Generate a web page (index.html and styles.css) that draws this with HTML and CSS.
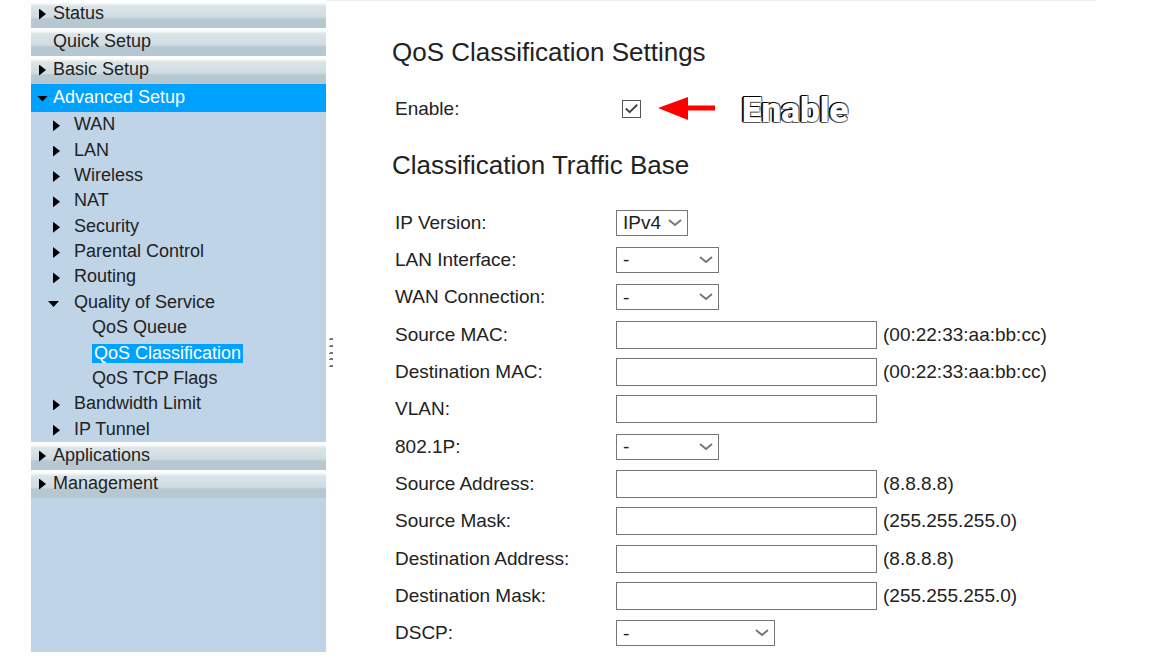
FILE: index.html
```html
<!DOCTYPE html>
<html lang="en">
<head>
    <meta charset="UTF-8">
    <meta name="viewport" content="width=device-width, initial-scale=1.0">
    <title>QoS Classification</title>
    <link rel="stylesheet" href="styles.css">
</head>
<body>
    <div class="page">
        <nav class="sidebar">
            <a class="menu closed" href="#">Status</a>
            <a class="menu" href="#">Quick Setup</a>
            <a class="menu closed" href="#">Basic Setup</a>
            <a class="menu open active" href="#">Advanced Setup</a>
            <ul class="submenu">
                <li><a class="closed" href="#">WAN</a></li>
                <li><a class="closed" href="#">LAN</a></li>
                <li><a class="closed" href="#">Wireless</a></li>
                <li><a class="closed" href="#">NAT</a></li>
                <li><a class="closed" href="#">Security</a></li>
                <li><a class="closed" href="#">Parental Control</a></li>
                <li><a class="closed" href="#">Routing</a></li>
                <li class="expanded">
                    <a class="open" href="#">Quality of Service</a>
                    <a class="leaf" href="#">QoS Queue</a>
                    <a class="leaf" href="#"><span class="current">QoS Classification</span></a>
                    <a class="leaf" href="#">QoS TCP Flags</a>
                </li>
                <li><a class="closed" href="#">Bandwidth Limit</a></li>
                <li><a class="closed" href="#">IP Tunnel</a></li>
            </ul>
            <a class="menu closed" href="#">Applications</a>
            <a class="menu closed" href="#">Management</a>
        </nav>

        <div class="splitter">
            <svg width="4" height="30" viewBox="0 0 4 30" fill="#777">
                <path d="M0 1h1v1h-1zM1 0h3v2h-3zM0 8h1v1h-1zM1 7h3v2h-3zM0 15h1v1h-1zM1 14h3v2h-3zM0 21h1v1h-1zM1 20h3v2h-3zM0 28h1v1h-1zM1 27h3v2h-3z"/>
            </svg>
        </div>

        <main class="content">
            <h1>QoS Classification Settings</h1>
            <div class="row">
                <label for="enable">Enable:</label>
                <input type="checkbox" id="enable" checked>
                <svg class="arrow" width="57" height="24" viewBox="0 0 57 24">
                    <path d="M0 11L30 0V8.500H57V13.500H30V23Z" fill="#f00"/>
                </svg>
                <span class="callout">Enable</span>
            </div>

            <h1>Classification Traffic Base</h1>
            <form class="fields">
                <div class="row">
                    <label for="ipVersion">IP Version:</label>
                    <select id="ipVersion" class="small"><option>IPv4</option></select>
                </div>
                <div class="row">
                    <label for="lan">LAN Interface:</label>
                    <select id="lan"><option>-</option></select>
                </div>
                <div class="row">
                    <label for="wan">WAN Connection:</label>
                    <select id="wan"><option>-</option></select>
                </div>
                <div class="row">
                    <label for="srcMac">Source MAC:</label>
                    <input type="text" id="srcMac">
                    <span class="hint">(00:22:33:aa:bb:cc)</span>
                </div>
                <div class="row">
                    <label for="dstMac">Destination MAC:</label>
                    <input type="text" id="dstMac">
                    <span class="hint">(00:22:33:aa:bb:cc)</span>
                </div>
                <div class="row">
                    <label for="vlan">VLAN:</label>
                    <input type="text" id="vlan">
                </div>
                <div class="row">
                    <label for="dot1p">802.1P:</label>
                    <select id="dot1p"><option>-</option></select>
                </div>
                <div class="row">
                    <label for="srcAddr">Source Address:</label>
                    <input type="text" id="srcAddr">
                    <span class="hint">(8.8.8.8)</span>
                </div>
                <div class="row">
                    <label for="srcMask">Source Mask:</label>
                    <input type="text" id="srcMask">
                    <span class="hint">(255.255.255.0)</span>
                </div>
                <div class="row">
                    <label for="dstAddr">Destination Address:</label>
                    <input type="text" id="dstAddr">
                    <span class="hint">(8.8.8.8)</span>
                </div>
                <div class="row">
                    <label for="dstMask">Destination Mask:</label>
                    <input type="text" id="dstMask">
                    <span class="hint">(255.255.255.0)</span>
                </div>
                <div class="row">
                    <label for="dscp">DSCP:</label>
                    <select id="dscp" class="wide"><option>-</option></select>
                </div>
            </form>
        </main>
    </div>
</body>
</html>
```
FILE: styles.css
```css
* {
    box-sizing: border-box;
}
body {
    margin: 0;
    background: #fefefe;
    color: #222;
    font-family: "Liberation Sans", Arial, sans-serif;
    font-size: 19px;
}
.page {
    display: flex;
    min-height: 100vh;
    padding: 0 55px 4px 31px;
}

/* Sidebar */
.sidebar {
    flex: 0 0 295px;
    background: #bfd4e7;
    font-size: 18px;
}
.sidebar a {
    display: flex;
    align-items: center;
    color: #222;
    text-decoration: none;
}
.sidebar .menu {
    height: 28px;
    padding: 0 0 2px 22px;
    background: linear-gradient(#fff 0, #fafcfc 3px, #dbe4e8 6px, #d0dce2 17px, #b7c8d1 19px, #b5c7d1 28px);
}
.sidebar .active {
    background: #00a2ff;
    color: #fff;
}
.submenu {
    display: grid;
    grid-auto-rows: 1fr;
    min-height: 330px;
    margin: 0;
    padding: 0;
    list-style: none;
}
.submenu li {
    display: grid;
    grid-auto-rows: 1fr;
}
.submenu .expanded {
    grid-row: span 4;
}
.submenu a {
    padding-left: 43px;
}
.submenu .leaf {
    padding-left: 61px;
}
.current {
    padding: 0 2px;
    background: #00a2ff;
    color: #fff;
    line-height: 19px;
}

/* Tree markers */
.closed::before,
.open::before {
    content: "";
    flex: none;
    background: #000;
}
.closed::before {
    width: 7px;
    height: 11px;
    margin: 2px 7px 0 -14px;
    clip-path: polygon(0 0, 100% 50%, 0 100%);
}
.open::before {
    width: 11px;
    height: 6px;
    margin: 3px 5px 0 -16px;
    clip-path: polygon(0 0, 100% 0, 50% 100%);
}
.submenu .closed::before {
    margin-left: -21px;
    margin-right: 14px;
}
.submenu .open::before {
    margin-left: -26px;
    margin-right: 15px;
}

.splitter {
    display: flex;
    align-items: center;
    flex: 0 0 66px;
    padding: 52px 0 0 3px;
    border-top: 1px solid #eee;
}

/* Settings */
.content {
    display: flex;
    flex: 1;
    flex-direction: column;
    padding-top: 36px;
    border-top: 1px solid #eee;
}
h1 {
    margin: 0;
    font-size: 26px;
    font-weight: normal;
    line-height: 30px;
}
.row {
    display: flex;
    align-items: center;
    padding-left: 3px;
}
h1 + .row {
    height: 38px;
    margin: 23px 0 22px;
}
.row label {
    flex: 0 0 221px;
}
.fields {
    display: grid;
    flex: 1;
    grid-auto-rows: 1fr;
    margin-top: 24px;
}
input,
select {
    margin: 0;
    border: 1px solid #767676;
    border-radius: 0;
    background-color: #fff;
    color: #222;
    font: inherit;
}
input[type="text"] {
    width: 261px;
    height: 28px;
    padding: 0 6px;
}
input[type="checkbox"] {
    appearance: none;
    width: 19px;
    height: 18px;
    margin-left: 6px;
    border-color: #555;
    background: url("data:image/svg+xml,%3Csvg xmlns='http://www.w3.org/2000/svg' viewBox='0 0 18 16'%3E%3Cpath d='M3 8l4 4 8-8' fill='none' stroke='%23444' stroke-width='2'/%3E%3C/svg%3E") center no-repeat;
}
select {
    appearance: none;
    width: 103px;
    height: 26px;
    padding: 0 6px;
    background: #fff url("data:image/svg+xml,%3Csvg xmlns='http://www.w3.org/2000/svg' width='14' height='8'%3E%3Cpath d='M1 1l6 5 6-5' fill='none' stroke='%23777' stroke-width='2'/%3E%3C/svg%3E") right 5px center no-repeat;
}
select.small {
    width: 72px;
}
select.wide {
    width: 159px;
}
.hint {
    margin-left: 6px;
}
.arrow {
    margin-left: 17px;
}
.callout {
    margin-left: 27px;
    padding-top: 4px;
    color: #fff;
    font-family: Impact, Roboto, sans-serif;
    font-size: 35px;
    font-weight: 900;
    line-height: 38px;
    text-shadow: -1px -1px #000, 1px -1px #555, -1px 1px #555, 1px 1px #999, -2px 0 #000;
}
```
